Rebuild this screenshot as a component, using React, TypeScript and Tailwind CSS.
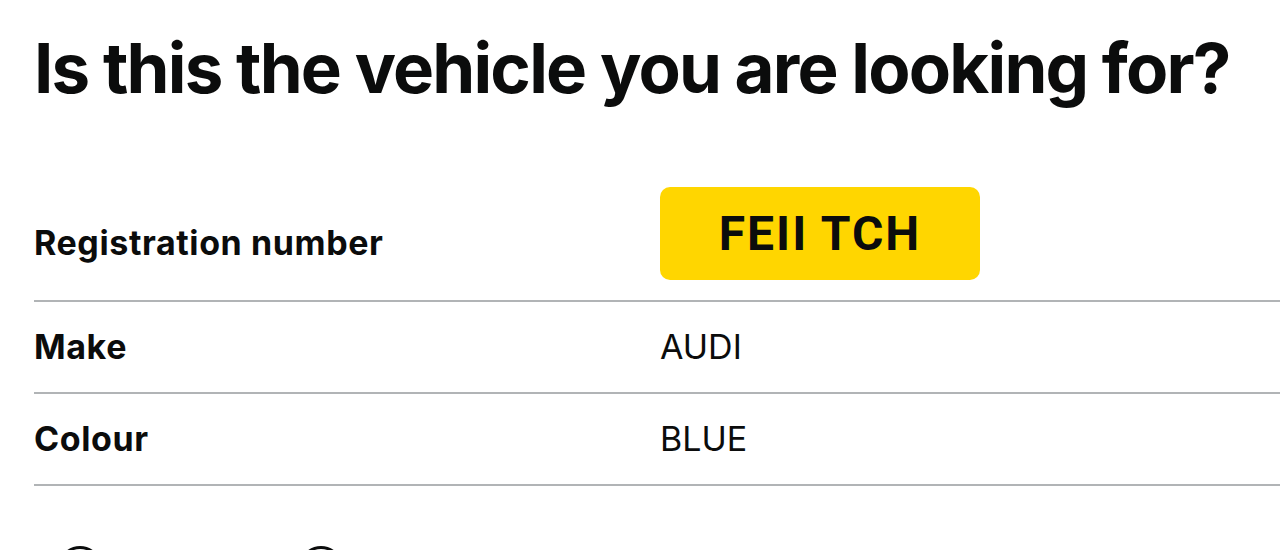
export default function App() {
    const rows = [
        { label: 'Make', value: 'AUDI' },
        { label: 'Colour', value: 'BLUE' },
    ];

    return (
        <div className="h-[550px] overflow-hidden bg-white pl-[34px] text-[#0b0c0c] font-['Inter','Liberation_Sans',sans-serif]">
            <h1 className="pt-[30px] text-[69px] leading-[76px] font-bold tracking-[-1.8px] whitespace-nowrap">
                Is this the vehicle you are looking for?
            </h1>

            <div className="mt-[62px]">
                <div className="flex h-[134px] border-b-2 border-[#b1b4b6]">
                    <div className="w-[626px] pt-[55px] text-[34px] leading-[40px] font-bold tracking-[0.6px]">Registration number</div>
                    <div className="pt-[19px]">
                        <div className="flex h-[93px] w-[320px] items-center justify-center rounded-[10px] bg-[#ffd600]">
                            <span className="text-[48px] font-bold leading-none tracking-[2px] font-['Roboto','DejaVu_Sans',sans-serif]">FEII TCH</span>
                        </div>
                    </div>
                </div>
                {rows.map((row) => (
                    <div key={row.label} className="flex h-[92px] items-center border-b-2 border-[#b1b4b6]">
                        <div className="w-[626px] text-[34px] leading-[40px] font-bold tracking-[0.6px]">{row.label}</div>
                        <div className="text-[34px] leading-[40px]">{row.value}</div>
                    </div>
                ))}
            </div>

            <div className="mt-[60px] flex pl-[24px]">
                <label className="flex w-[241px] items-start gap-4">
                    <span className="h-[44px] w-[44px] shrink-0 rounded-full border-[3px] border-[#0b0c0c]" />
                    <span className="pt-[2px] text-[34px] leading-[40px]">Yes</span>
                </label>
                <label className="flex items-start gap-4">
                    <span className="h-[44px] w-[44px] shrink-0 rounded-full border-[3px] border-[#0b0c0c]" />
                    <span className="pt-[2px] text-[34px] leading-[40px]">No</span>
                </label>
            </div>
        </div>
    );
}
